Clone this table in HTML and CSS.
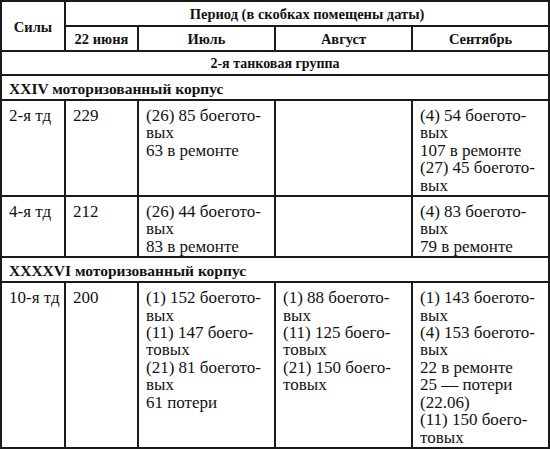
FILE: index.html
```html
<!DOCTYPE html>
<html lang="ru">
<head>
<meta charset="utf-8">
<title>Силы</title>
<link rel="stylesheet" href="styles.css">
</head>
<body>
<table class="tbl">
  <colgroup>
    <col class="c1"><col class="c2"><col class="c3"><col class="c4"><col class="c5">
  </colgroup>
  <thead>
    <tr>
      <th class="head" rowspan="2">Силы</th>
      <th class="head" colspan="4">Период (в скобках помещены даты)</th>
    </tr>
    <tr>
      <th class="head">22 июня</th>
      <th class="head">Июль</th>
      <th class="head">Август</th>
      <th class="head">Сентябрь</th>
    </tr>
  </thead>
  <tbody>
    <tr><td class="group" colspan="5">2-я танковая группа</td></tr>
    <tr><td class="corps" colspan="5">XXIV моторизованный корпус</td></tr>
    <tr>
      <td class="cell">2-я тд</td>
      <td class="cell">229</td>
      <td class="cell">(26) 85 боегото-<br>вых<br>63 в ремонте</td>
      <td class="cell"></td>
      <td class="cell">(4) 54 боегото-<br>вых<br>107 в ремонте<br>(27) 45 боегото-<br>вых</td>
    </tr>
    <tr>
      <td class="cell">4-я тд</td>
      <td class="cell">212</td>
      <td class="cell">(26) 44 боегото-<br>вых<br>83 в ремонте</td>
      <td class="cell"></td>
      <td class="cell">(4) 83 боегото-<br>вых<br>79 в ремонте</td>
    </tr>
    <tr><td class="corps" colspan="5">XXXXVI моторизованный корпус</td></tr>
    <tr>
      <td class="cell">10-я тд</td>
      <td class="cell">200</td>
      <td class="cell">(1) 152 боегото-<br>вых<br>(11) 147 боего-<br>товых<br>(21) 81 боегото-<br>вых<br>61 потери</td>
      <td class="cell">(1) 88 боегото-<br>вых<br>(11) 125 боего-<br>товых<br>(21) 150 боего-<br>товых</td>
      <td class="cell">(1) 143 боегото-<br>вых<br>(4) 153 боегото-<br>вых<br>22 в ремонте<br>25 — потери<br>(22.06)<br>(11) 150 боего-<br>товых</td>
    </tr>
  </tbody>
</table>
</body>
</html>
```

FILE: styles.css
```css
html, body {
  margin: 0;
  padding: 0;
  background: #ffffff;
}

body {
  font-family: "Liberation Serif", "Times New Roman", serif;
  font-size: 17px;
  color: #121212;
}

.tbl {
  border-collapse: collapse;
  table-layout: fixed;
  width: 548px;
  margin: 0;
  border: 2px solid #1a1a1a;
}

.c1 { width: 64px; }
.c2 { width: 73px; }
.c3 { width: 137px; }
.c4 { width: 137px; }
.c5 { width: 137px; }

.tbl th,
.tbl td {
  border: 2px solid #1a1a1a;
  line-height: 17px;
}

.head {
  font-size: 14.5px;
  font-weight: bold;
  text-align: center;
  vertical-align: middle;
  padding: 4px 4px 2px;
}

.group {
  font-size: 14px;
  font-weight: bold;
  text-align: center;
  padding: 3px 8px 2px;
}

.corps {
  font-size: 15.5px;
  font-weight: bold;
  text-align: left;
  padding: 4px 8px 2px 7px;
}

.tbl .cell {
  vertical-align: top;
  text-align: left;
  line-height: 17.4px;
  padding: 6px 2px 1px 7px;
  white-space: nowrap;
}
```
